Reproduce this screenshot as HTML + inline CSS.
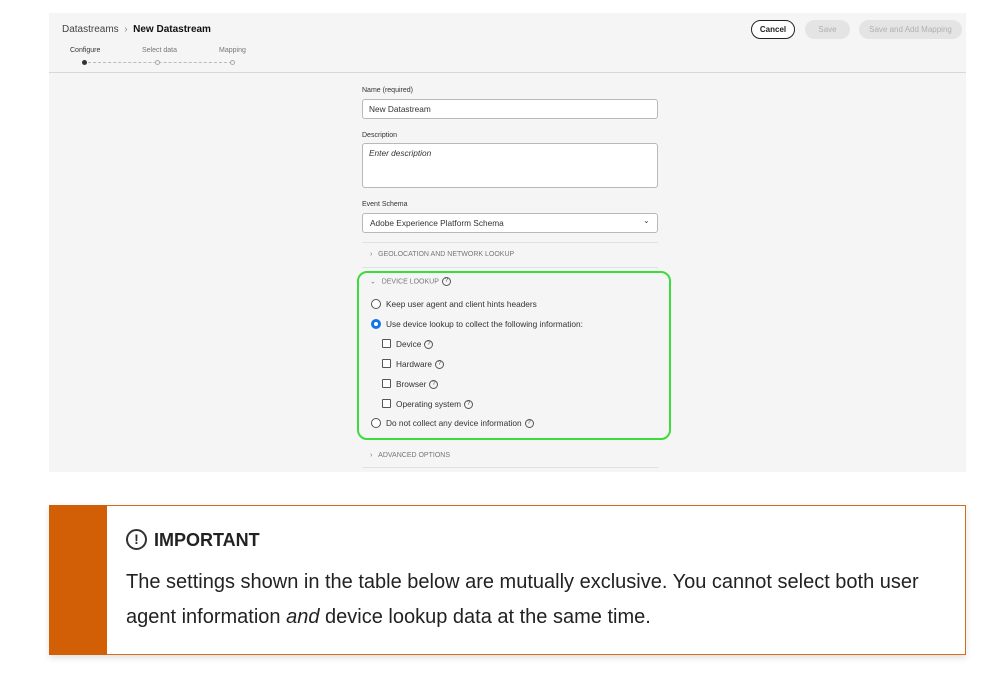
<!DOCTYPE html>
<html><head><meta charset="utf-8"><style>
*{margin:0;padding:0;box-sizing:border-box}
body{width:999px;height:680px;background:#fff;position:relative;font-family:"Liberation Sans",sans-serif;color:#2c2c2c;overflow:hidden}
.a{position:absolute;white-space:nowrap}
.shot{position:absolute;left:49px;top:13px;width:917px;height:459px;background:#f5f5f5}
.s{font-size:8.3px;color:#333}
.inp{position:absolute;background:#fff;border:1px solid #b8b8b8;border-radius:3px}
.q{display:inline-block;width:9px;height:9px;border:1px solid #555;border-radius:50%;font-size:6px;line-height:7px;text-align:center;vertical-align:middle;margin-left:3px;color:#444}
.rad{position:absolute;width:10px;height:10px;border:1.5px solid #555;border-radius:50%;background:#fff}
.cb{position:absolute;width:9px;height:9px;border:1.5px solid #555;border-radius:1px;background:#fff}
.hr{position:absolute;height:1px;background:#e1e1e1;left:362px;width:296px}
</style></head><body>
<div class="shot"></div>
<div class="a" style="left:62px;top:24px;font-size:10px;color:#444">Datastreams <span style="color:#888">&nbsp;›&nbsp;</span> <b style="color:#111">New Datastream</b></div>
<div class="a s" style="left:70px;top:47px;font-size:7px">Configure</div>
<div class="a s" style="left:142px;top:47px;font-size:7px;color:#777">Select data</div>
<div class="a s" style="left:219px;top:47px;font-size:7px;color:#777">Mapping</div>
<div class="a" style="left:82px;top:60px;width:5px;height:5px;border-radius:50%;background:#333"></div>
<div class="a" style="left:88px;top:62px;width:144px;border-top:1px dashed #bbb"></div>
<div class="a" style="left:155px;top:60px;width:5px;height:5px;border-radius:50%;border:1px solid #aaa;background:#f5f5f5"></div>
<div class="a" style="left:230px;top:60px;width:5px;height:5px;border-radius:50%;border:1px solid #aaa;background:#f5f5f5"></div>
<div class="a" style="left:49px;top:72px;width:917px;height:1px;background:#d8d8d8"></div>
<div class="a" style="left:751px;top:20px;width:44px;height:19px;border:1.5px solid #222;border-radius:10px;font-size:8px;font-weight:bold;text-align:center;line-height:17px;background:#fff;color:#222;display:flex;align-items:center;justify-content:center">Cancel</div>
<div class="a" style="left:805px;top:20px;width:45px;height:19px;border-radius:10px;background:#e4e4e4;font-size:8px;text-align:center;line-height:19px;color:#b0b0b0">Save</div>
<div class="a" style="left:859px;top:20px;width:103px;height:19px;border-radius:10px;background:#e4e4e4;font-size:8px;text-align:center;line-height:19px;color:#b0b0b0">Save and Add Mapping</div>

<div class="a s" style="left:362px;top:87px;font-size:7px">Name (required)</div>
<div class="inp" style="left:362px;top:99px;width:296px;height:20px"></div>
<div class="a s" style="left:369px;top:104px">New Datastream</div>
<div class="a s" style="left:362px;top:132px;font-size:7px">Description</div>
<div class="inp" style="left:362px;top:143px;width:296px;height:45px"></div>
<div class="a s" style="left:369px;top:148px;font-style:italic">Enter description</div>
<div class="a s" style="left:362px;top:201px;font-size:7px">Event Schema</div>
<div class="inp" style="left:362px;top:213px;width:296px;height:20px"></div>
<div class="a s" style="left:370px;top:218px">Adobe Experience Platform Schema</div>
<div class="a" style="left:643px;top:216px;font-size:8px;color:#444">⌄</div>
<div class="hr" style="top:242px"></div>
<div class="a" style="left:370px;top:251px;font-size:7px;color:#777">›&nbsp;&nbsp;&nbsp;GEOLOCATION AND NETWORK LOOKUP</div>
<div class="hr" style="top:267px"></div>
<div class="a" style="left:357px;top:271px;width:314px;height:169px;border:2px solid #3bdc3b;border-radius:10px"></div>
<div class="a" style="left:370px;top:277px;font-size:7px;color:#777">⌄&nbsp;&nbsp;&nbsp;DEVICE LOOKUP<span class="q">?</span></div>
<div class="rad" style="left:371px;top:299px"></div>
<div class="a s" style="left:386px;top:299px">Keep user agent and client hints headers</div>
<div class="rad" style="left:371px;top:319px;border:3px solid #1473e6"></div>
<div class="a s" style="left:386px;top:319px">Use device lookup to collect the following information:</div>
<div class="cb" style="left:382px;top:339px"></div><div class="a s" style="left:396px;top:339px">Device<span class="q">?</span></div>
<div class="cb" style="left:382px;top:359px"></div><div class="a s" style="left:396px;top:359px">Hardware<span class="q">?</span></div>
<div class="cb" style="left:382px;top:379px"></div><div class="a s" style="left:396px;top:379px">Browser<span class="q">?</span></div>
<div class="cb" style="left:382px;top:399px"></div><div class="a s" style="left:396px;top:399px">Operating system<span class="q">?</span></div>
<div class="rad" style="left:371px;top:418px"></div>
<div class="a s" style="left:386px;top:418px">Do not collect any device information<span class="q">?</span></div>
<div class="a" style="left:370px;top:452px;font-size:7px;color:#777">›&nbsp;&nbsp;&nbsp;ADVANCED OPTIONS</div>
<div class="hr" style="top:467px"></div>

<div class="a" style="left:49px;top:505px;width:917px;height:150px;border:1px solid #d86a1a;background:#fff;box-shadow:0 3px 6px rgba(0,0,0,.12)"></div>
<div class="a" style="left:49px;top:505px;width:58px;height:150px;background:#d25f05"></div>
<div class="a" style="left:126px;top:529px;width:21px;height:21px;border:2px solid #333;border-radius:50%;font-size:14px;font-weight:bold;text-align:center;line-height:17px">!</div>
<div class="a" style="left:154px;top:530px;font-size:18px;font-weight:bold;color:#222">IMPORTANT</div>
<div class="a" style="left:126px;top:571px;font-size:20px;color:#222">The settings shown in the table below are mutually exclusive. You cannot select both user</div>
<div class="a" style="left:126px;top:606px;font-size:20px;color:#222">agent information <i>and</i> device lookup data at the same time.</div>
</body></html>
